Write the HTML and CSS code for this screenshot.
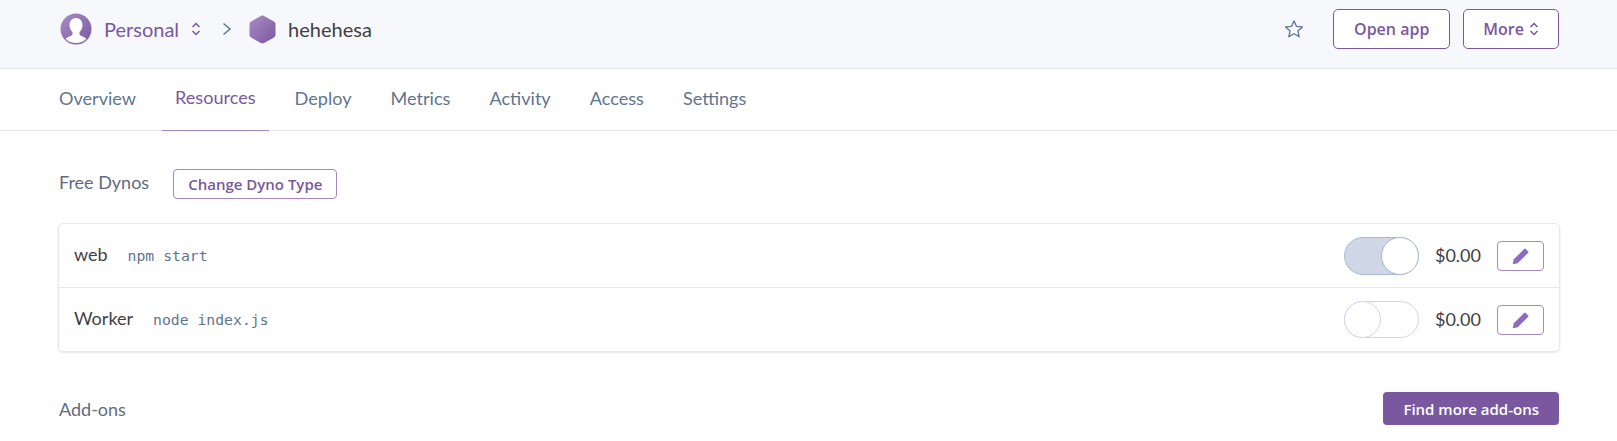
FILE: index.html
```html
<!DOCTYPE html>
<html>
<head>
<meta charset="utf-8">
<title>hehehesa · Resources</title>
<link rel="stylesheet" href="styles.css">
</head>
<body>
<svg class="defs" width="0" height="0">
    <defs>
        <linearGradient id="purple" x1="0" y1="0" x2="1" y2="1">
            <stop offset="0" stop-color="#a98cc6"/>
            <stop offset="1" stop-color="#79589f"/>
        </linearGradient>
    </defs>
</svg>
<header class="topbar">
    <div class="crumbs">
        <svg class="avatar" width="32" height="32" viewBox="0 0 32 32">
            <circle cx="16" cy="16" r="15.5" fill="url(#purple)"/>
            <path d="M16 5c-4 0-6.5 3-6.5 7 0 3 1.200 5.600 3 7v2c0 1-1 1.600-2.500 2.200-2 .8-3.500 1.500-4.300 2.600C8.300 28.800 12 30 16 30s7.700-1.200 10.300-4.200c-.8-1.100-2.300-1.800-4.300-2.600-1.500-.6-2.500-1.200-2.500-2.200v-2c1.800-1.400 3-4 3-7 0-4-2.500-7-6.500-7z" fill="#fff"/>
        </svg>
        <span class="team">Personal</span>
        <svg class="updown" width="10" height="14" viewBox="0 0 10 14">
            <path d="M1.500 5 5 1.500 8.500 5M1.500 9 5 12.500 8.500 9" fill="none" stroke="#79589f" stroke-width="1.500"/>
        </svg>
        <svg class="chev" width="10" height="14" viewBox="0 0 10 14">
            <path d="M1.500 1.500 8 7l-6.500 5.500" fill="none" stroke="#5f7590" stroke-width="1.500"/>
        </svg>
        <svg class="hex" width="27" height="29" viewBox="0 0 27 29">
            <path d="M13.500 .5c.6 0 1.100.1 1.600.4l9.800 5.600c1 .6 1.600 1.600 1.600 2.700v10.600c0 1.100-.6 2.100-1.600 2.700l-9.800 5.600c-1 .6-2.200.6-3.200 0l-9.800-5.600c-1-.6-1.600-1.600-1.600-2.700V9.200c0-1.100.6-2.100 1.600-2.700L11.900.9c.5-.3 1-.4 1.600-.4z" fill="url(#purple)"/>
        </svg>
        <span class="app">hehehesa</span>
    </div>
    <div class="actions">
        <svg class="star" width="20" height="20" viewBox="0 0 20 20">
            <path d="M10 1.800l2.400 5.500 6 .6-4.500 4 1.300 5.900L10 14.700l-5.200 3.100 1.300-5.900-4.500-4 6-.6z" fill="none" stroke="#5f7590" stroke-width="1.300" stroke-linejoin="round"/>
        </svg>
        <button class="btn-outline">Open app</button>
        <button class="btn-outline btn-more">More
            <svg width="10" height="14" viewBox="0 0 10 14">
                <path d="M1.500 5 5 1.500 8.500 5M1.500 9 5 12.500 8.500 9" fill="none" stroke="#79589f" stroke-width="1.500"/>
            </svg>
        </button>
    </div>
</header>
<nav class="tabs">
    <a>Overview</a>
    <a class="active">Resources</a>
    <a>Deploy</a>
    <a>Metrics</a>
    <a>Activity</a>
    <a>Access</a>
    <a>Settings</a>
</nav>
<main>
    <div class="dyno-head">
        <h2>Free Dynos</h2>
        <button class="btn-small">Change Dyno Type</button>
    </div>
    <section class="card">
        <div class="row">
            <span class="name">web</span>
            <code>npm start</code>
            <span class="toggle on"><i></i></span>
            <span class="price">$0.00</span>
            <button class="edit">
                <svg width="20" height="20" viewBox="0 0 18 18"><path d="M1.500 16.500l1-4.500L11.800 2.700a1 1 0 0 1 1.400 0l2.100 2.100a1 1 0 0 1 0 1.400L6 15.500z" fill="#8e6cbd"/></svg>
            </button>
        </div>
        <div class="row">
            <span class="name">Worker</span>
            <code>node index.js</code>
            <span class="toggle"><i></i></span>
            <span class="price">$0.00</span>
            <button class="edit">
                <svg width="20" height="20" viewBox="0 0 18 18"><path d="M1.500 16.500l1-4.500L11.800 2.700a1 1 0 0 1 1.400 0l2.100 2.100a1 1 0 0 1 0 1.400L6 15.500z" fill="#8e6cbd"/></svg>
            </button>
        </div>
    </section>
    <div class="addons">
        <h2>Add-ons</h2>
        <button class="btn-solid">Find more add-ons</button>
    </div>
</main>
</body>
</html>
```

FILE: styles.css
```css
* {
    box-sizing: border-box;
}

html, body {
    height: 441px;
    overflow: hidden;
}

body {
    margin: 0;
    font-family: "Lato", sans-serif;
    background: #fff;
    color: #3f3f44;
}

button {
    font-family: "Open Sans", sans-serif;
    cursor: pointer;
}

.defs {
    display: block;
    height: 0;
}

.topbar {
    height: 69px;
    padding: 0 58px 10px 60px;
    display: flex;
    align-items: center;
    justify-content: space-between;
    background: #f7f8fc;
    border-bottom: 1px solid #e3e6f2;
}

.crumbs {
    display: flex;
    align-items: center;
}

.team {
    margin-left: 12px;
    font-size: 20px;
    color: #79589f;
}

.updown {
    margin-left: 12px;
}

.chev {
    margin-left: 21px;
}

.hex {
    margin-left: 17px;
}

.app {
    margin-left: 12px;
    font-size: 20px;
    color: #3f3f44;
}

.actions {
    display: flex;
    align-items: center;
}

.star {
    margin-right: 29px;
}

.btn-outline {
    height: 40px;
    padding: 0 20px;
    margin-left: 13px;
    background: #fff;
    border: 1px solid #79589f;
    border-radius: 5px;
    color: #79589f;
    font-size: 16px;
    font-weight: 600;
    display: flex;
    align-items: center;
    gap: 5px;
}

.btn-more {
    padding: 0 19px;
}

.star + .btn-outline {
    margin-left: 0;
}

.tabs {
    height: 62px;
    padding: 0 0 0 46px;
    display: flex;
    align-items: center;
    border-bottom: 1px solid #e7e7f3;
}

.tabs a {
    height: 62px;
    padding: 0 13px 4px;
    margin-right: 13px;
    display: flex;
    align-items: center;
    font-size: 18.100px;
    color: #5f7590;
}

.tabs a.active {
    color: #79589f;
    border-bottom: 1px solid #a487c3;
}

main {
    padding: 38px 57px 0 59px;
}

h2 {
    margin: 0;
    font-size: 18px;
    font-weight: 400;
    color: #5f6b80;
}

.dyno-head {
    display: flex;
    align-items: center;
    gap: 24px;
}

.dyno-head h2 {
    padding-bottom: 4px;
}

.btn-small {
    height: 30px;
    padding: 0 14px;
    background: #fff;
    border: 1px solid #a487c3;
    border-radius: 4px;
    color: #79589f;
    font-size: 15px;
    font-weight: 600;
}

.card {
    margin-top: 24px;
    margin-left: -1px;
    border: 1px solid #e7e7f3;
    border-radius: 5px;
    box-shadow: 0 1px 2px rgba(60, 60, 110, 0.12);
}

.row {
    height: 63px;
    padding: 0 15px;
    display: flex;
    align-items: center;
}

.row + .row {
    height: 64px;
    border-top: 1px solid #e7e7f3;
}

.name {
    padding-bottom: 3px;
    font-size: 18px;
    color: #3f3f44;
}

code {
    margin-left: 20px;
    padding-bottom: 1px;
    font-family: "DejaVu Sans Mono", monospace;
    font-size: 14.750px;
    color: #5f7590;
}

.toggle {
    margin-left: auto;
    width: 75px;
    height: 37px;
    position: relative;
    border: 1px solid #cfd7e6;
    border-radius: 19px;
    background: #fff;
}

.toggle i {
    position: absolute;
    left: -1px;
    top: -1px;
    width: 37px;
    height: 37px;
    background: #fff;
    border: 1px solid #cfd7e6;
    border-radius: 50%;
}

.toggle.on {
    height: 38px;
    background: #cfd7e6;
    border-color: #a9b9d6;
}

.toggle.on i {
    left: auto;
    right: -1px;
    width: 38px;
    height: 38px;
    border-color: #a9b9d6;
}

.price {
    margin-left: 16px;
    padding-bottom: 1px;
    font-size: 18px;
    color: #3f3f44;
}

.edit {
    margin-left: 16px;
    width: 47px;
    height: 30px;
    padding: 0;
    background: #fff;
    border: 1px solid #a487c3;
    border-radius: 4px;
    display: flex;
    align-items: center;
    justify-content: center;
}

.addons {
    margin-top: 40px;
    display: flex;
    align-items: center;
    justify-content: space-between;
}

.btn-solid {
    height: 33px;
    margin-right: 1px;
    padding: 0 20px;
    background: #79589f;
    border: none;
    border-radius: 4px;
    color: #fff;
    font-size: 15px;
    font-weight: 600;
}
```
